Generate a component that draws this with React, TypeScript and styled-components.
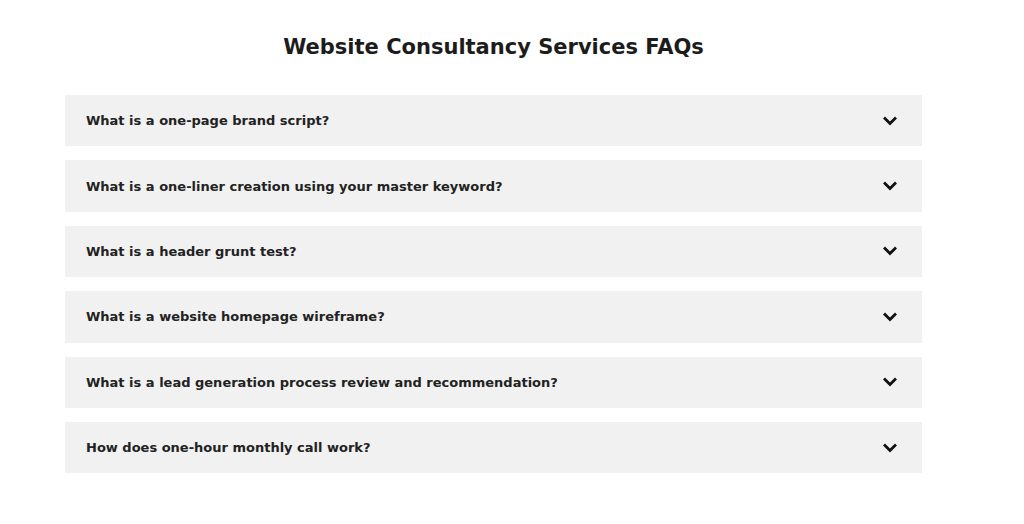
import React, { useState } from "react";
import styled, { createGlobalStyle } from "styled-components";

const GlobalStyle = createGlobalStyle`
  html, body {
    margin: 0;
    padding: 0;
    background: #ffffff;
  }
  body {
    font-family: "DejaVu Sans", "Liberation Sans", sans-serif;
    color: #1f1f1f;
  }
`;

const Page = styled.main`
  width: 1024px;
  min-height: 524px;
  box-sizing: border-box;
  padding: 35px 102px 0 65px;
`;

const Title = styled.h2`
  margin: 0 0 35px;
  text-align: center;
  font-family: "DejaVu Sans", sans-serif;
  font-weight: 700;
  font-size: 21px;
  line-height: 25px;
  color: #1c1c1c;
`;

const List = styled.div`
  display: flex;
  flex-direction: column;
  gap: 14px;
`;

const Item = styled.div`
  background: #f1f1f1;
`;

const Question = styled.button`
  all: unset;
  box-sizing: border-box;
  width: 100%;
  height: 51.4px;
  display: flex;
  align-items: center;
  justify-content: space-between;
  padding: 0 25px 0 21px;
  cursor: pointer;
  font-family: "DejaVu Sans", sans-serif;
  font-weight: 700;
  font-size: 13px;
  color: #222222;
`;

const Chevron = styled.svg<{ $open: boolean }>`
  width: 14px;
  height: 10px;
  flex: none;
  transform: rotate(${(p) => (p.$open ? 180 : 0)}deg);
`;

const Answer = styled.div`
  padding: 0 21px 18px;
  font-family: "DejaVu Sans", sans-serif;
  font-size: 13px;
  line-height: 1.6;
  color: #444;
`;

const faqs = [
  "What is a one-page brand script?",
  "What is a one-liner creation using your master keyword?",
  "What is a header grunt test?",
  "What is a website homepage wireframe?",
  "What is a lead generation process review and recommendation?",
  "How does one-hour monthly call work?",
];

export default function App() {
  const [open, setOpen] = useState<number | null>(null);
  return (
    <>
      <GlobalStyle />
      <Page>
        <Title>Website Consultancy Services FAQs</Title>
        <List>
          {faqs.map((q, i) => (
            <Item key={q}>
              <Question onClick={() => setOpen(open === i ? null : i)}>
                <span>{q}</span>
                <Chevron $open={open === i} viewBox="0 0 14 10">
                  <polyline
                    points="2,2.5 7,7.5 12,2.5"
                    fill="none"
                    stroke="#111"
                    strokeWidth="2.8"
                    strokeLinecap="square"
                  />
                </Chevron>
              </Question>
              {open === i && <Answer>More details coming soon.</Answer>}
            </Item>
          ))}
        </List>
      </Page>
    </>
  );
}
